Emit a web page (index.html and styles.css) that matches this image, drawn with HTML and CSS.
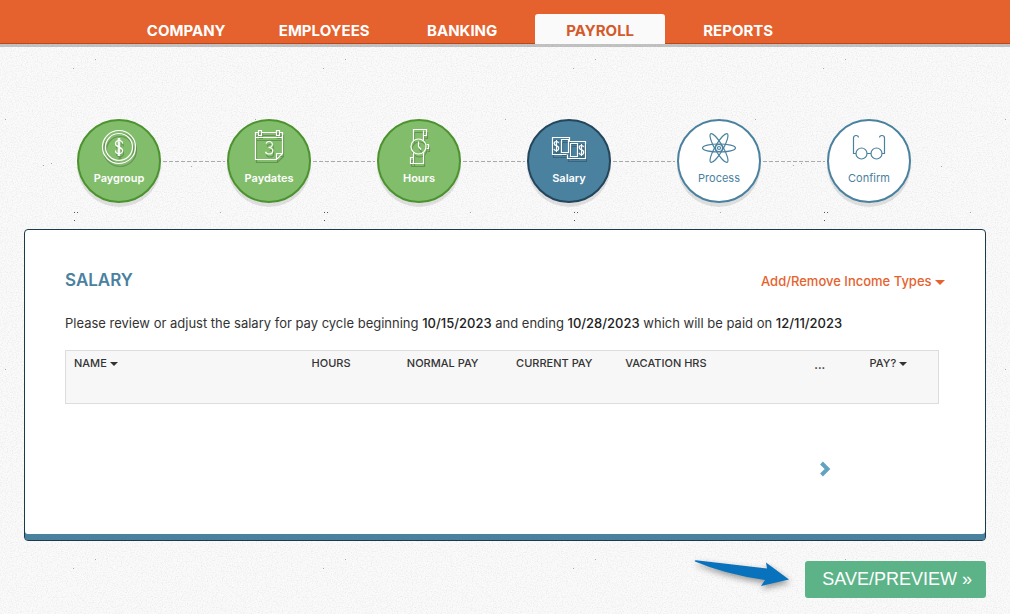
FILE: index.html
```html
<!DOCTYPE html>
<html lang="en">
<head>
<meta charset="utf-8">
<title>Payroll - Salary</title>
<link rel="stylesheet" href="styles.css">
</head>
<body>
<header class="topbar">
  <nav class="nav">
    <a class="nav-link" href="#company">COMPANY</a>
    <a class="nav-link" href="#employees">EMPLOYEES</a>
    <a class="nav-link" href="#banking">BANKING</a>
    <a class="nav-link nav-current" href="#payroll" aria-current="page">PAYROLL</a>
    <a class="nav-link" href="#reports">REPORTS</a>
  </nav>
</header>
<main class="page">
  <nav class="steps" aria-label="Payroll steps">
    <a class="step step-done" href="#paygroup">
      <svg class="step-icon" viewBox="0 0 36 36"><circle cx="18" cy="18" r="16.5"/><circle cx="18" cy="18" r="13.5"/><path d="M21.5 14.5c0-2-1.500-3-3.500-3s-3.500 1.200-3.500 3.200c0 4.300 7 2.600 7 6.800 0 2-1.500 3.200-3.500 3.200s-3.500-1.200-3.500-3.200M17.300 9v18M18.700 9v18"/></svg>
      <span>Paygroup</span>
    </a>
    <span class="link-line"></span>
    <a class="step step-done" href="#paydates">
      <svg class="step-icon" viewBox="0 0 36 36"><path d="M7.500 3.500h-3v27h21l6-6v-21h-3M10.500 3.500h15M4.500 8.500h27M25.500 30.500v-6h6M7.500 1.500h3v5h-3zM25.500 1.500h3v5h-3zM15 14.500c.5-1.300 1.500-2 3-2 2 0 3.300 1.200 3.300 2.900S20 18.500 17.500 18.500c2.800 0 4.200 1.200 4.200 3.200s-1.500 3.300-3.700 3.300c-1.800 0-3-.8-3.500-2.300"/></svg>
      <span>Paydates</span>
    </a>
    <span class="link-line"></span>
    <a class="step step-done" href="#hours">
      <svg class="step-icon" viewBox="0 0 36 36"><circle cx="17.500" cy="17.500" r="7.500"/><path d="M12.500 11.500V.5h13v6h-3v-5M22.500 6.500v5M22.500 23.500v11h-13v-6h3v6M12.500 28.500v-5M25.500 15.500h2v4h-2M17.500 12.500v5l2.500 3"/></svg>
      <span>Hours</span>
    </a>
    <span class="link-line"></span>
    <a class="step step-active" href="#salary" aria-current="step">
      <svg class="step-icon" viewBox="0 0 36 36"><path d="M15.500 25.500h-14v-17h17v4M17.500 10.500h-7v13h7zM18.500 12.500h16v17h-18v-4M26.500 14.500h-7v13h7zM7.500 14c-.3-1-1-1.500-2-1.500-3 0-3 3.500-.3 4.200 3.300.8 3 4.800 0 4.800-1.200 0-2-.6-2.300-1.700M5.500 11v12M32.500 18c-.3-1-1-1.500-2-1.500-3 0-3 3.500-.3 4.200 3.300.8 3 4.800 0 4.800-1.200 0-2-.6-2.300-1.700M30.500 15v12"/></svg>
      <span>Salary</span>
    </a>
    <span class="link-line"></span>
    <a class="step" href="#process">
      <svg class="step-icon" viewBox="0 0 36 36"><ellipse cx="18" cy="19" rx="16.500" ry="4"/><ellipse cx="18" cy="19" rx="16.500" ry="4" transform="rotate(60 18 19)"/><ellipse cx="18" cy="19" rx="16.500" ry="4" transform="rotate(120 18 19)"/><circle cx="18" cy="19" r="3.500"/><circle cx="18" cy="19" r="1.500"/></svg>
      <span>Process</span>
    </a>
    <span class="link-line"></span>
    <a class="step" href="#confirm">
      <svg class="step-icon" viewBox="0 0 36 36"><circle cx="10.500" cy="24.500" r="5.500"/><circle cx="25.500" cy="24.500" r="5.500"/><path d="M16 24.500h4M5 24.500H2.500V9c0-3 5-3.500 5-.5M31 24.500h2.500V9c0-3-5-3.500-5-.5"/></svg>
      <span>Confirm</span>
    </a>
  </nav>

  <section class="panel">
    <div class="panel-head">
      <h1 class="title">SALARY</h1>
      <button class="income" type="button">Add/Remove Income Types <span class="caret"></span></button>
    </div>
    <p class="intro">Please review or adjust the salary for pay cycle beginning <strong>10/15/2023</strong> and ending <strong>10/28/2023</strong> which will be paid on <strong>12/11/2023</strong></p>
    <table class="salary-table">
      <colgroup><col class="col-name"><col class="col-num"><col class="col-num"><col class="col-num"><col class="col-num"><col class="col-blank"><col class="col-more"><col class="col-pay"></colgroup>
      <thead>
        <tr>
          <th class="cell-left" scope="col">NAME <span class="caret"></span></th>
          <th scope="col">HOURS</th>
          <th scope="col">NORMAL PAY</th>
          <th scope="col">CURRENT PAY</th>
          <th scope="col">VACATION HRS</th>
          <td></td>
          <th class="cell-more" scope="col">...</th>
          <th class="cell-pay" scope="col">PAY? <span class="caret"></span></th>
        </tr>
      </thead>
    </table>
    <div class="pager">
      <button class="next" type="button" aria-label="Next columns"><svg class="next-icon" viewBox="0 0 12 16"><path d="M2.500 2L8.500 8l-6 6"/></svg></button>
    </div>
  </section>

  <div class="actions">
    <svg class="pointer" viewBox="0 0 96 28"><path d="M1 .5Q0-.8 2-.7L73 7.500 72 1.500 95 18.500 67 25l4-6Q30 13 1 .5z"/></svg>
    <button class="save" type="button">SAVE/PREVIEW »</button>
  </div>
</main>
</body>
</html>
```
FILE: styles.css
```css
* { box-sizing: border-box; }

body {
  margin: 0;
  color: #333;
  font-family: Inter, "Liberation Sans", sans-serif;
  font-size: 13px;
  background-color: #fafafa;
  background-image: url("data:image/svg+xml,%3Csvg xmlns='http://www.w3.org/2000/svg' width='250' height='250'%3E%3Cfilter id='n' x='0' y='0' width='100%25' height='100%25'%3E%3CfeTurbulence type='fractalNoise' baseFrequency='.8' numOctaves='3' stitchTiles='stitch'/%3E%3CfeColorMatrix values='0 0 0 0 .2 0 0 0 0 .2 0 0 0 0 .2 1.2 0 0 0 -.52'/%3E%3C/filter%3E%3Crect width='250' height='250' filter='url(%23n)' opacity='.22'/%3E%3Cpath d='M74 212h1v1h-1zM77 212h1v1h-1zM74 220h1v1h-1z' fill='%23555'/%3E%3Cpath d='M95 59h1v1h-1zM73 68h1v1h-1zM43 165h1v1h-1zM5 119h1v1h-1zM51 163h1v1h-1zM220 212h1v1h-1zM191 166h1v1h-1z' fill='%23aaa'/%3E%3C/svg%3E");
}

button { font-family: inherit; cursor: pointer; }

.topbar {
  padding: 14px 12% 0;
  background: #e5622e;
  border-bottom: 1px solid #b9481d;
  box-shadow: 0 3px 0 rgba(0, 0, 0, .22);
}

.nav { display: flex; gap: 8px; margin-bottom: -1px; }

.nav-link {
  width: 130px;
  padding: 5px 0 1px;
  border-radius: 3px 3px 0 0;
  color: #fff;
  font-size: 15px;
  font-weight: 700;
  line-height: 24px;
  text-align: center;
  text-decoration: none;
}

.nav-current { background: #fafafa; color: #d35a2a; }

.page { padding: 75px 24px 16px; }

.steps { display: flex; align-items: center; padding: 0 75px 0 53px; }

.step {
  display: flex;
  flex: none;
  flex-direction: column;
  align-items: center;
  gap: 5px;
  width: 84px;
  height: 84px;
  padding-top: 8px;
  border: 2px solid #4a819f;
  border-radius: 50%;
  background: #fff;
  box-shadow: 0 4px 0 rgba(0, 0, 0, .1);
  color: #4a819f;
  font-size: 11px;
  line-height: 16px;
  text-decoration: none;
}

.step-done, .step-active { color: #fff; font-weight: 600; }
.step-done { background: #82bd6b; border-color: #4c922f; }
.step-active { background: #4a819f; border-color: #23465c; }

.step-icon {
  width: 36px;
  height: 36px;
  fill: none;
  stroke: currentColor;
  stroke-width: 1.200;
}

.step-done .step-icon, .step-active .step-icon { filter: drop-shadow(1px 3px 0 rgba(0, 0, 0, .22)); }

.link-line {
  flex: 1;
  height: 1px;
  margin: 0 2px;
  background: repeating-linear-gradient(90deg, #aaa 0 4px, transparent 4px 6px);
}

.panel {
  min-height: 312px;
  margin-top: 26px;
  padding: 38px 40px 0;
  border: 1px solid #1c3a4c;
  border-radius: 4px;
  background: #fff;
  box-shadow: inset 0 -6px 0 #4a819f;
}

.panel-head { display: flex; justify-content: space-between; align-items: flex-start; }

.title {
  margin: 0;
  color: #4a819f;
  font-size: 17px;
  font-weight: 600;
  line-height: 24px;
}

.income {
  padding: 0;
  border: 0;
  background: none;
  color: #e5622e;
  font-size: 13px;
  font-weight: 500;
  line-height: 26px;
}

.caret {
  display: inline-block;
  border: 4px solid transparent;
  border-top-color: currentColor;
  border-bottom: 0;
  vertical-align: middle;
}

.income .caret { border-width: 5px 5px 0; }

.intro { margin: 19px 0 17px; line-height: 20px; }
.intro strong { font-weight: 500; color: #222; }

.salary-table {
  width: calc(100% - 6px);
  height: 54px;
  border: 1px solid #ddd;
  border-spacing: 0;
  background: #f7f7f7;
  table-layout: fixed;
}

.salary-table th {
  padding: 4px 0;
  font-size: 11px;
  font-weight: 500;
  line-height: 16px;
  vertical-align: top;
  white-space: nowrap;
}

.salary-table .cell-left { padding-left: 8px; text-align: left; }
.salary-table .cell-more { padding-top: 6px; font-weight: 700; }
.salary-table .cell-pay { padding-left: 8px; }

.col-name { width: 24%; }
.col-num { width: 12.8%; }
.col-blank { width: 10%; }
.col-more { width: 2.500%; }

.pager { display: flex; justify-content: flex-end; padding: 57px 114px 0 0; }

.next { padding: 0; border: 0; background: none; }

.next-icon {
  display: block;
  width: 12px;
  height: 16px;
  fill: none;
  stroke: #65a2c2;
  stroke-width: 4;
}

.actions {
  display: flex;
  justify-content: flex-end;
  align-items: flex-start;
  gap: 15px;
  margin-top: 20px;
}

.pointer {
  width: 96px;
  height: 28px;
  overflow: visible;
  fill: #0872bd;
  filter: drop-shadow(1px 3px 3px rgba(0, 0, 0, .4));
}

.save {
  height: 37px;
  padding: 0 14px 0 17px;
  border: 0;
  border-radius: 3px;
  background: #5cb388;
  color: #fff;
  font-family: "Liberation Sans", Arial, sans-serif;
  font-size: 18px;
}
```
